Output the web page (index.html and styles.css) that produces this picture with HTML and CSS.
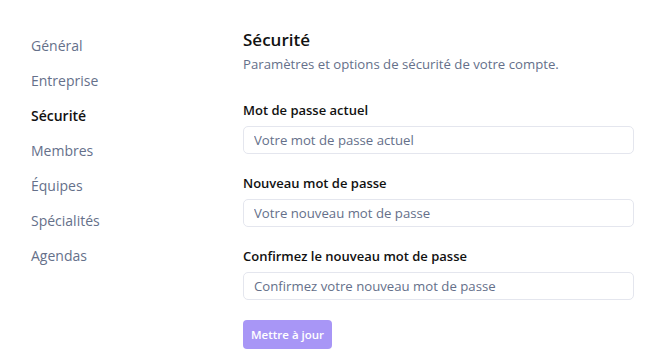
FILE: index.html
```html
<!DOCTYPE html>
<html lang="fr">
<head>
  <meta charset="UTF-8">
  <title>Paramètres - Sécurité</title>
  <link rel="stylesheet" href="styles.css">
</head>
<body>
  <div class="layout">
    <nav class="sidebar">
      <a href="#">Général</a>
      <a href="#">Entreprise</a>
      <a href="#" class="active">Sécurité</a>
      <a href="#">Membres</a>
      <a href="#">Équipes</a>
      <a href="#">Spécialités</a>
      <a href="#">Agendas</a>
    </nav>

    <main class="content">
      <h1>Sécurité</h1>
      <p class="subtitle">Paramètres et options de sécurité de votre compte.</p>

      <form class="form">
        <div class="field">
          <label for="current">Mot de passe actuel</label>
          <input type="password" id="current" placeholder="Votre mot de passe actuel">
        </div>
        <div class="field">
          <label for="new">Nouveau mot de passe</label>
          <input type="password" id="new" placeholder="Votre nouveau mot de passe">
        </div>
        <div class="field">
          <label for="confirm">Confirmez le nouveau mot de passe</label>
          <input type="password" id="confirm" placeholder="Confirmez votre nouveau mot de passe">
        </div>
        <button type="button" class="submit" disabled>Mettre à jour</button>
      </form>
    </main>
  </div>
</body>
</html>
```

FILE: styles.css
```css
body {
  margin: 0;
  font-family: "Open Sans", "Noto Sans", sans-serif;
  background: #fff;
  color: #111;
}
.layout {
  display: flex;
  padding: 28px 36px 0 31px;
}
.sidebar {
  width: 212px;
  padding-top: 7px;
  display: flex;
  flex-direction: column;
  gap: 14px;
}
.sidebar a {
  font-size: 14px;
  line-height: 21px;
  color: #65708a;
  text-decoration: none;
}
.sidebar a.active {
  color: #111;
  font-weight: 600;
}
.content {
  flex: 1;
}
h1 {
  margin: 0;
  font-size: 17px;
  line-height: 24px;
  font-weight: 600;
}
.subtitle {
  margin: 2px 0 0;
  font-size: 13.2px;
  line-height: 20px;
  color: #65708a;
}
.form {
  margin-top: 26px;
}
.field {
  margin-bottom: 19px;
}
label {
  display: block;
  font-size: 13px;
  line-height: 20px;
  font-weight: 600;
  margin-bottom: 6px;
}
input {
  box-sizing: border-box;
  display: block;
  width: 100%;
  height: 28px;
  padding: 0 10px;
  border: 1px solid #e4e6ee;
  border-radius: 5px;
  font-family: inherit;
  font-size: 13.2px;
}
input::placeholder {
  color: #65708a;
}
.submit {
  margin-top: 1px;
  height: 29px;
  padding: 0 8px;
  border: none;
  border-radius: 4px;
  background: #a896f6;
  color: #fff;
  font-family: inherit;
  font-size: 11.5px;
  font-weight: 600;
}
```
